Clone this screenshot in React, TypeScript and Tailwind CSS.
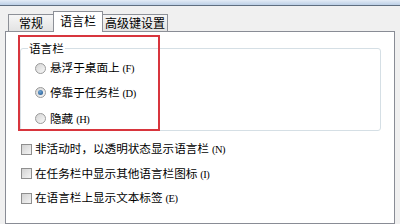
const font = "font-['SimSun','Noto_Sans_CJK_SC',sans-serif]";

function Radio({ checked }: { checked?: boolean }) {
  return (
    <span className="relative inline-flex h-[11px] w-[11px] shrink-0 items-center justify-center rounded-full border border-[#9a9a9a] bg-gradient-to-br from-[#d4d4d4] to-[#f8f8f8]">
      {checked && (
        <span className="h-[5px] w-[5px] rounded-full bg-[radial-gradient(circle_at_40%_35%,#6fa8d8,#1d4f86)]" />
      )}
    </span>
  );
}

function Checkbox() {
  return (
    <span className="inline-block h-[11px] w-[11px] shrink-0 border border-[#8f8f8f] bg-gradient-to-br from-[#d2d2d2] to-[#f4f4f4]" />
  );
}

function Key({ k }: { k: string }) {
  return (
    <span className="ml-[3px] font-['Liberation_Serif',serif] text-[10.5px] tracking-[-0.5px]">
      ({k})
    </span>
  );
}

export default function App() {
  const radios = [
    { label: "悬浮于桌面上", k: "F", h: "h-[24px]" },
    { label: "停靠于任务栏", k: "D", h: "h-[25px]" },
    { label: "隐藏", k: "H", h: "h-[27px]" },
  ];
  const checks = [
    { label: "非活动时，以透明状态显示语言栏", k: "N" },
    { label: "在任务栏中显示其他语言栏图标", k: "I" },
    { label: "在语言栏上显示文本标签", k: "E" },
  ];

  return (
    <div
      className={`relative flex h-[224px] w-[400px] flex-col overflow-hidden bg-[#f0f0f0] text-[11.6px] text-black ${font}`}
    >
      <div className="h-[6px] shrink-0 border-b border-[#5f6e80] bg-gradient-to-b from-[#e4ecf6] to-[#bccfe6]" />

      {/* tabs */}
      <div className="relative z-10 -mb-px flex shrink-0 items-end pl-[8px] pt-[5px]">
        <div className="flex h-[18px] w-[45px] items-center justify-center border border-r-0 border-[#8d9097] bg-gradient-to-b from-[#f6f6f6] to-[#e3e3e3] text-[12px]">
          常规
        </div>
        <div className="flex h-[21px] w-[50px] items-center justify-center border border-b-0 border-[#8d9097] bg-white pb-[2px] text-[12px]">
          语言栏
        </div>
        <div className="flex h-[18px] w-[65px] items-center justify-center border border-l-0 border-[#8d9097] bg-gradient-to-b from-[#f6f6f6] to-[#e3e3e3] text-[12px]">
          高级键设置
        </div>
      </div>

      {/* panel */}
      <div className="mx-[5px] flex-1 border border-[#898c95] bg-white pl-[14px] pr-[13px] pt-[9px]">
        <fieldset className="h-[90px] rounded-[3px] border border-[#d5dfe5] pl-[14px]">
          <legend className="ml-[-7px] px-[1px] leading-[14px]">语言栏</legend>
          <div className="flex flex-col pt-[1px]">
            {radios.map((r, i) => (
              <div key={r.label} className={`flex ${r.h} items-center gap-[4px]`}>
                <Radio checked={i === 1} />
                <span>
                  {r.label}
                  <Key k={r.k} />
                </span>
              </div>
            ))}
          </div>
        </fieldset>

        <div className="flex flex-col pt-[6px]">
          {checks.map((c) => (
            <div key={c.label} className="flex h-[24.5px] items-center gap-[3px] pl-[1px]">
              <Checkbox />
              <span>
                {c.label}
                <Key k={c.k} />
              </span>
            </div>
          ))}
        </div>
      </div>

      {/* red annotation */}
      <div className="pointer-events-none absolute left-[18px] top-[35px] h-[96px] w-[142px] border-2 border-[#d8353d]" />
    </div>
  );
}
